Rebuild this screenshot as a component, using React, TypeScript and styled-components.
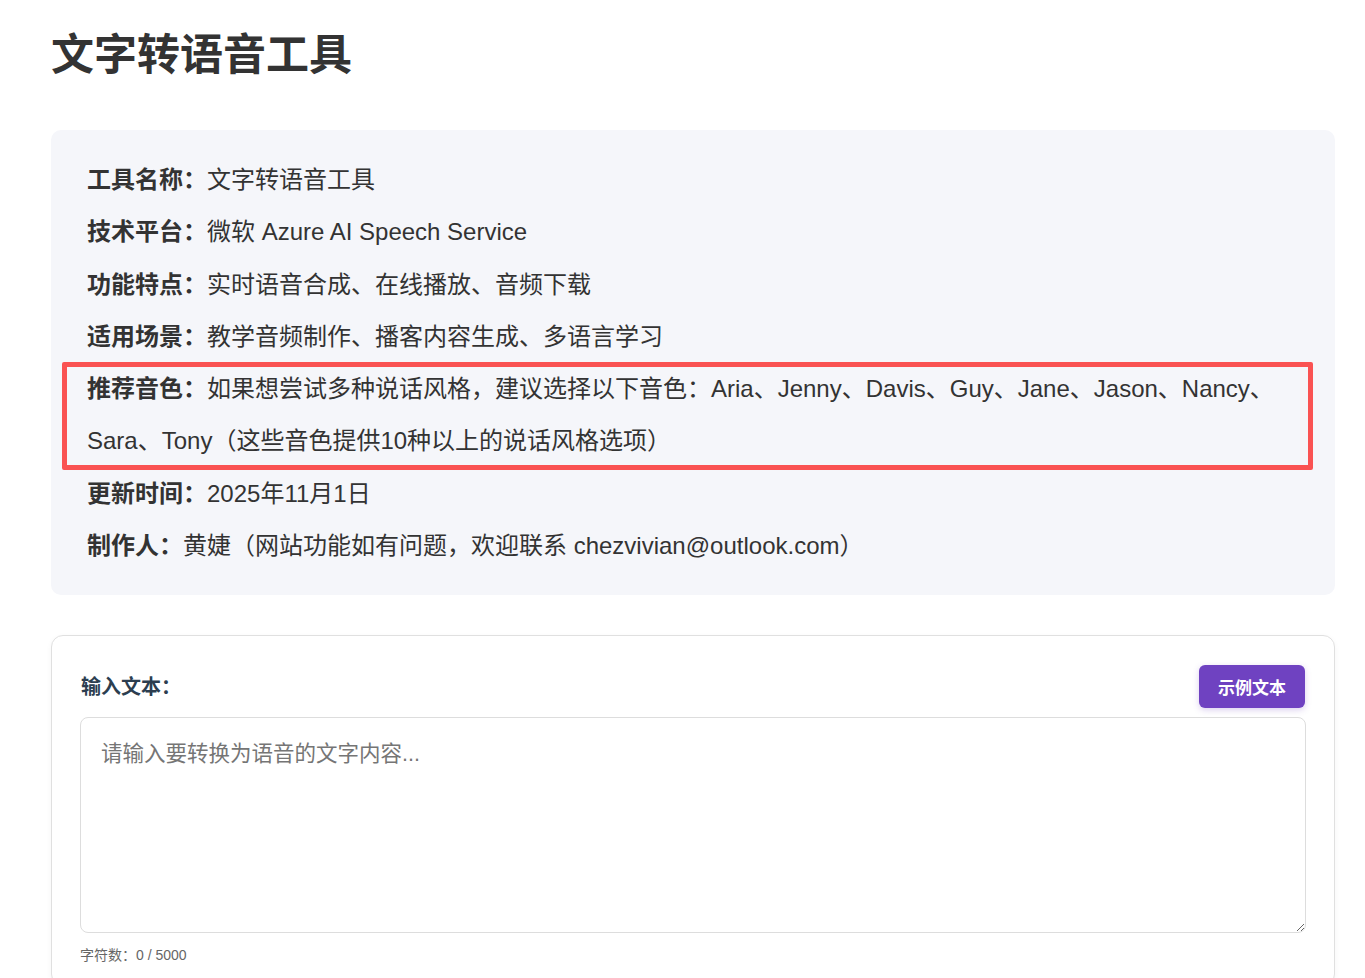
import { createGlobalStyle, styled } from "styled-components";

const GlobalStyle = createGlobalStyle`
  body {
    margin: 0;
    background: #fff;
    font-family: "Liberation Sans", "Noto Sans CJK SC", sans-serif;
    color: #333;
  }
`;

const infoRows = [
  { label: "工具名称：", text: "文字转语音工具" },
  { label: "技术平台：", text: "微软 Azure AI Speech Service" },
  { label: "功能特点：", text: "实时语音合成、在线播放、音频下载" },
  { label: "适用场景：", text: "教学音频制作、播客内容生成、多语言学习" },
  {
    label: "推荐音色：",
    text: "如果想尝试多种说话风格，建议选择以下音色：Aria、Jenny、Davis、Guy、Jane、Jason、Nancy、Sara、Tony（这些音色提供10种以上的说话风格选项）",
    marked: true,
  },
  { label: "更新时间：", text: "2025年11月1日" },
  {
    label: "制作人：",
    text: "黄婕（网站功能如有问题，欢迎联系 chezvivian@outlook.com）",
  },
];

const App = () => {
  return (
    <>
      <GlobalStyle />
      <Page>
        <Title>文字转语音工具</Title>
        <InfoBox>
          {infoRows.map(({ label, text, marked }) => (
            <InfoRow key={label} $marked={!!marked}>
              <Label>{label}</Label>
              <span>{text}</span>
            </InfoRow>
          ))}
        </InfoBox>
        <InputCard>
          <CardHeader>
            <FieldLabel>输入文本：</FieldLabel>
            <SampleButton>示例文本</SampleButton>
          </CardHeader>
          <TextInput placeholder="请输入要转换为语音的文字内容..." />
          <CharCount>字符数：0 / 5000</CharCount>
        </InputCard>
      </Page>
    </>
  );
};

export default App;

const Page = styled.div`
  padding: 0 30px 40px 51px;
`;

const Title = styled.h1`
  margin: 29px 0 49px;
  font-size: 43px;
  line-height: 52px;
  font-weight: 700;
  color: #333;
`;

const InfoBox = styled.div`
  background: #f5f6fa;
  border-radius: 10px;
  padding: 24px 36px 23px;
  margin-bottom: 40px;
`;

const InfoRow = styled.div<{ $marked: boolean }>`
  position: relative;
  font-size: 24px;
  line-height: 52.3px;
  color: #333;
  ${({ $marked }) =>
    $marked &&
    `
    &::after {
      content: "";
      position: absolute;
      left: -25px;
      right: -14px;
      top: -1px;
      bottom: -2px;
      border: 5px solid #fa5252;
      border-radius: 2px;
      pointer-events: none;
    }
  `}
`;

const Label = styled.strong`
  font-weight: 700;
`;

const InputCard = styled.div`
  background: #fff;
  border: 1px solid #e0e0e0;
  border-radius: 12px;
  padding: 29px 29px 20px 28px;
  box-shadow: 0 2px 6px rgba(0, 0, 0, 0.04);
`;

const CardHeader = styled.div`
  display: flex;
  align-items: center;
  justify-content: space-between;
  margin-bottom: 9px;
`;

const FieldLabel = styled.label`
  font-size: 20px;
  font-weight: 700;
  color: #2c3e50;
  padding-left: 1px;
  margin-top: -2px;
`;

const SampleButton = styled.button`
  height: 43px;
  padding: 0 19px;
  border: none;
  border-radius: 6px;
  background: #6f42c1;
  color: #fff;
  font-family: "Liberation Sans", "Noto Sans CJK SC", sans-serif;
  font-size: 17px;
  font-weight: 700;
  box-shadow: 0 2px 6px rgba(111, 66, 193, 0.25);
  cursor: pointer;
`;

const TextInput = styled.textarea`
  display: block;
  box-sizing: border-box;
  width: calc(100% + 1px);
  height: 216px;
  padding: 21px 20px;
  border: 1px solid #ddd;
  border-radius: 8px;
  font-family: "Liberation Sans", "Noto Sans CJK SC", sans-serif;
  font-size: 21.5px;
  line-height: 31px;
  color: #333;
  resize: vertical;
  &::placeholder {
    color: #757575;
  }
`;

const CharCount = styled.div`
  margin-top: 12px;
  font-size: 14px;
  line-height: 20px;
  color: #666;
`;
